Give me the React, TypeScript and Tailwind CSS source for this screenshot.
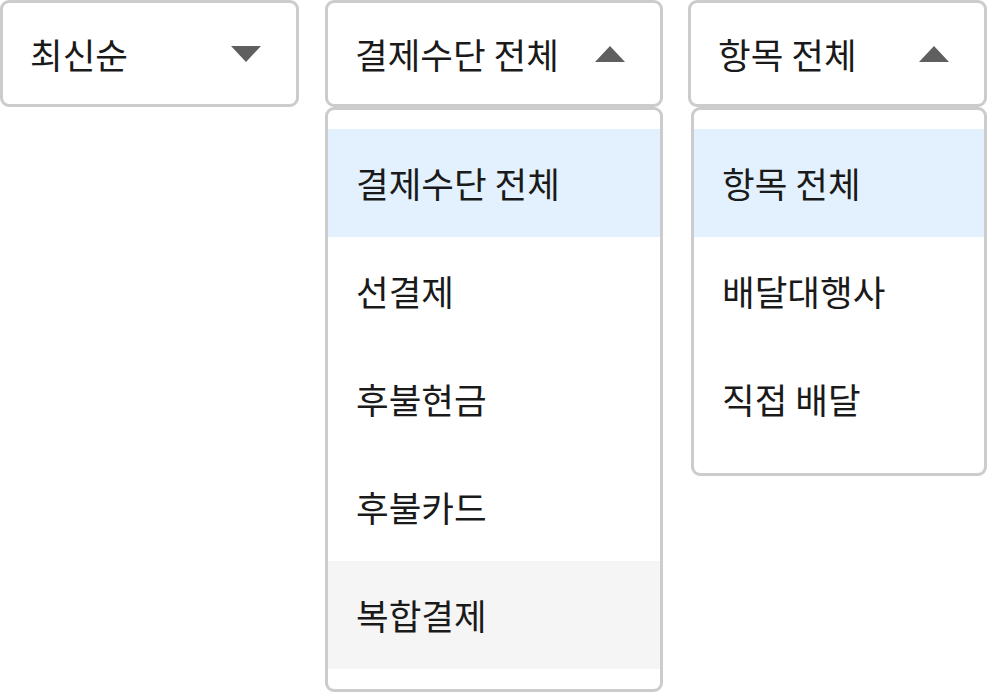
const payOptions = ["결제수단 전체", "선결제", "후불현금", "후불카드", "복합결제"]
const itemOptions = ["항목 전체", "배달대행사", "직접 배달"]

function Caret({ up }: { up?: boolean }) {
  return (
    <svg width="30" height="16" viewBox="0 0 30 16" className="shrink-0">
      {up ? <path d="M0 16 L15 0 L30 16 Z" fill="#5f5f5f" /> : <path d="M0 0 L30 0 L15 16 Z" fill="#5f5f5f" />}
    </svg>
  )
}

function SelectBox({ label, open }: { label: string; open?: boolean }) {
  return (
    <div className="flex h-[107px] items-center justify-between rounded-[9px] border-[3px] border-[#cccccc] bg-white pl-[27px] pr-[35px]">
      <span className="text-[35.5px] leading-none text-[#1a1a1a]">{label}</span>
      <Caret up={open} />
    </div>
  )
}

function Menu({ options, hover }: { options: string[]; hover?: number }) {
  return (
    <ul className="rounded-[9px] border-[3px] border-[#cccccc] bg-white pt-[19px] pb-[20px]">
      {options.map((opt, i) => (
        <li
          key={opt}
          className={
            "flex h-[108px] items-center pl-[28px] text-[35.5px] leading-none text-[#1a1a1a] " +
            (i === 0 ? "bg-[#e2f1fd]" : i === hover ? "bg-[#f5f5f5]" : "bg-white")
          }
        >
          {opt}
        </li>
      ))}
    </ul>
  )
}

export default function App() {
  return (
    <div className="flex h-[693px] w-[987px] items-start bg-white font-['Noto_Sans_CJK_KR','Noto_Sans',sans-serif]">
      <div className="w-[299px]">
        <SelectBox label="최신순" />
      </div>
      <div className="ml-[26px] w-[338px]">
        <SelectBox label="결제수단 전체" open />
        <Menu options={payOptions} hover={4} />
      </div>
      <div className="ml-[25px] w-[299px]">
        <SelectBox label="항목 전체" open />
        <div className="ml-[3px]">
          <Menu options={itemOptions} />
        </div>
      </div>
    </div>
  )
}
